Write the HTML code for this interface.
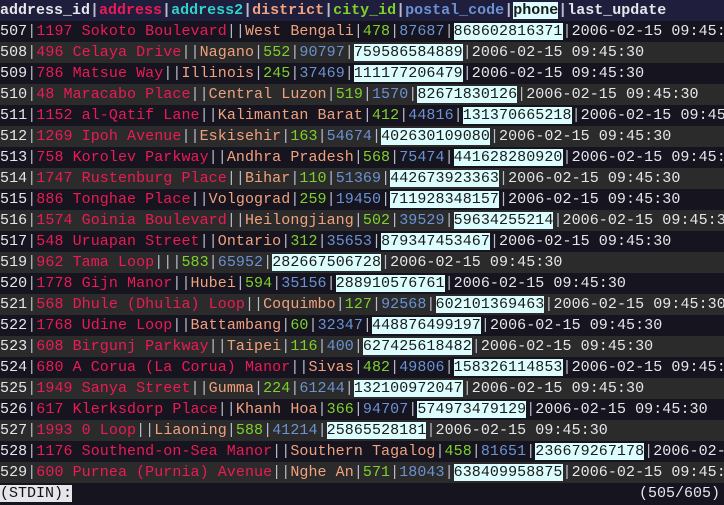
<!DOCTYPE html>
<html><head><meta charset="utf-8"><style>
html,body{margin:0;padding:0;background:#16141f;width:724px;height:505px;overflow:hidden}
.t{font-family:"Liberation Mono","DejaVu Sans Mono",monospace;font-size:15px;line-height:21px;color:#e6e6ea}
.l{white-space:pre;height:21px;overflow:hidden;width:724px;letter-spacing:0.07px}
.o{background:#16141f}.e{background:#2b2b2b}
.hd{background:#1f1e3c;font-weight:bold;letter-spacing:0}
.s{color:#b8bccc}
.a{color:#ec1a55}.b{color:#2fd3c8}.d{color:#f0a27f}.c{color:#7ed12a}.p{color:#6b92d2}
.h{background:#dcfdfd;color:#1a1a1a}
.st{background:#16141f}.st .x{background:#e6e6ea;color:#111}
</style></head><body><div class="t">
<div class="l hd">address_id<span class="s">|</span><span class="a">address</span><span class="s">|</span><span class="b">address2</span><span class="s">|</span><span class="d">district</span><span class="s">|</span><span class="c">city_id</span><span class="s">|</span><span class="p">postal_code</span><span class="s">|</span><span class="h">phone</span><span class="s">|</span>last_update</div>
<div class="l o">507<span class="s">|</span><span class="a">1197 Sokoto Boulevard</span><span class="s">||</span><span class="d">West Bengali</span><span class="s">|</span><span class="c">478</span><span class="s">|</span><span class="p">87687</span><span class="s">|</span><span class="h">868602816371</span><span class="s">|</span>2006-02-15 09:45:30</div>
<div class="l e">508<span class="s">|</span><span class="a">496 Celaya Drive</span><span class="s">||</span><span class="d">Nagano</span><span class="s">|</span><span class="c">552</span><span class="s">|</span><span class="p">90797</span><span class="s">|</span><span class="h">759586584889</span><span class="s">|</span>2006-02-15 09:45:30</div>
<div class="l o">509<span class="s">|</span><span class="a">786 Matsue Way</span><span class="s">||</span><span class="d">Illinois</span><span class="s">|</span><span class="c">245</span><span class="s">|</span><span class="p">37469</span><span class="s">|</span><span class="h">111177206479</span><span class="s">|</span>2006-02-15 09:45:30</div>
<div class="l e">510<span class="s">|</span><span class="a">48 Maracabo Place</span><span class="s">||</span><span class="d">Central Luzon</span><span class="s">|</span><span class="c">519</span><span class="s">|</span><span class="p">1570</span><span class="s">|</span><span class="h">82671830126</span><span class="s">|</span>2006-02-15 09:45:30</div>
<div class="l o">511<span class="s">|</span><span class="a">1152 al-Qatif Lane</span><span class="s">||</span><span class="d">Kalimantan Barat</span><span class="s">|</span><span class="c">412</span><span class="s">|</span><span class="p">44816</span><span class="s">|</span><span class="h">131370665218</span><span class="s">|</span>2006-02-15 09:45:30</div>
<div class="l e">512<span class="s">|</span><span class="a">1269 Ipoh Avenue</span><span class="s">||</span><span class="d">Eskisehir</span><span class="s">|</span><span class="c">163</span><span class="s">|</span><span class="p">54674</span><span class="s">|</span><span class="h">402630109080</span><span class="s">|</span>2006-02-15 09:45:30</div>
<div class="l o">513<span class="s">|</span><span class="a">758 Korolev Parkway</span><span class="s">||</span><span class="d">Andhra Pradesh</span><span class="s">|</span><span class="c">568</span><span class="s">|</span><span class="p">75474</span><span class="s">|</span><span class="h">441628280920</span><span class="s">|</span>2006-02-15 09:45:30</div>
<div class="l e">514<span class="s">|</span><span class="a">1747 Rustenburg Place</span><span class="s">||</span><span class="d">Bihar</span><span class="s">|</span><span class="c">110</span><span class="s">|</span><span class="p">51369</span><span class="s">|</span><span class="h">442673923363</span><span class="s">|</span>2006-02-15 09:45:30</div>
<div class="l o">515<span class="s">|</span><span class="a">886 Tonghae Place</span><span class="s">||</span><span class="d">Volgograd</span><span class="s">|</span><span class="c">259</span><span class="s">|</span><span class="p">19450</span><span class="s">|</span><span class="h">711928348157</span><span class="s">|</span>2006-02-15 09:45:30</div>
<div class="l e">516<span class="s">|</span><span class="a">1574 Goinia Boulevard</span><span class="s">||</span><span class="d">Heilongjiang</span><span class="s">|</span><span class="c">502</span><span class="s">|</span><span class="p">39529</span><span class="s">|</span><span class="h">59634255214</span><span class="s">|</span>2006-02-15 09:45:30</div>
<div class="l o">517<span class="s">|</span><span class="a">548 Uruapan Street</span><span class="s">||</span><span class="d">Ontario</span><span class="s">|</span><span class="c">312</span><span class="s">|</span><span class="p">35653</span><span class="s">|</span><span class="h">879347453467</span><span class="s">|</span>2006-02-15 09:45:30</div>
<div class="l e">519<span class="s">|</span><span class="a">962 Tama Loop</span><span class="s">|||</span><span class="c">583</span><span class="s">|</span><span class="p">65952</span><span class="s">|</span><span class="h">282667506728</span><span class="s">|</span>2006-02-15 09:45:30</div>
<div class="l o">520<span class="s">|</span><span class="a">1778 Gijn Manor</span><span class="s">||</span><span class="d">Hubei</span><span class="s">|</span><span class="c">594</span><span class="s">|</span><span class="p">35156</span><span class="s">|</span><span class="h">288910576761</span><span class="s">|</span>2006-02-15 09:45:30</div>
<div class="l e">521<span class="s">|</span><span class="a">568 Dhule (Dhulia) Loop</span><span class="s">||</span><span class="d">Coquimbo</span><span class="s">|</span><span class="c">127</span><span class="s">|</span><span class="p">92568</span><span class="s">|</span><span class="h">602101369463</span><span class="s">|</span>2006-02-15 09:45:30</div>
<div class="l o">522<span class="s">|</span><span class="a">1768 Udine Loop</span><span class="s">||</span><span class="d">Battambang</span><span class="s">|</span><span class="c">60</span><span class="s">|</span><span class="p">32347</span><span class="s">|</span><span class="h">448876499197</span><span class="s">|</span>2006-02-15 09:45:30</div>
<div class="l e">523<span class="s">|</span><span class="a">608 Birgunj Parkway</span><span class="s">||</span><span class="d">Taipei</span><span class="s">|</span><span class="c">116</span><span class="s">|</span><span class="p">400</span><span class="s">|</span><span class="h">627425618482</span><span class="s">|</span>2006-02-15 09:45:30</div>
<div class="l o">524<span class="s">|</span><span class="a">680 A Corua (La Corua) Manor</span><span class="s">||</span><span class="d">Sivas</span><span class="s">|</span><span class="c">482</span><span class="s">|</span><span class="p">49806</span><span class="s">|</span><span class="h">158326114853</span><span class="s">|</span>2006-02-15 09:45:30</div>
<div class="l e">525<span class="s">|</span><span class="a">1949 Sanya Street</span><span class="s">||</span><span class="d">Gumma</span><span class="s">|</span><span class="c">224</span><span class="s">|</span><span class="p">61244</span><span class="s">|</span><span class="h">132100972047</span><span class="s">|</span>2006-02-15 09:45:30</div>
<div class="l o">526<span class="s">|</span><span class="a">617 Klerksdorp Place</span><span class="s">||</span><span class="d">Khanh Hoa</span><span class="s">|</span><span class="c">366</span><span class="s">|</span><span class="p">94707</span><span class="s">|</span><span class="h">574973479129</span><span class="s">|</span>2006-02-15 09:45:30</div>
<div class="l e">527<span class="s">|</span><span class="a">1993 0 Loop</span><span class="s">||</span><span class="d">Liaoning</span><span class="s">|</span><span class="c">588</span><span class="s">|</span><span class="p">41214</span><span class="s">|</span><span class="h">25865528181</span><span class="s">|</span>2006-02-15 09:45:30</div>
<div class="l o">528<span class="s">|</span><span class="a">1176 Southend-on-Sea Manor</span><span class="s">||</span><span class="d">Southern Tagalog</span><span class="s">|</span><span class="c">458</span><span class="s">|</span><span class="p">81651</span><span class="s">|</span><span class="h">236679267178</span><span class="s">|</span>2006-02-15 09:45:30</div>
<div class="l e">529<span class="s">|</span><span class="a">600 Purnea (Purnia) Avenue</span><span class="s">||</span><span class="d">Nghe An</span><span class="s">|</span><span class="c">571</span><span class="s">|</span><span class="p">18043</span><span class="s">|</span><span class="h">638409958875</span><span class="s">|</span>2006-02-15 09:45:30</div>
<div class="l st" style="position:relative;letter-spacing:0"><span class="x">(STDIN):</span><span style="position:absolute;right:4px;top:0">(505/605)</span></div>
</div></body></html>
